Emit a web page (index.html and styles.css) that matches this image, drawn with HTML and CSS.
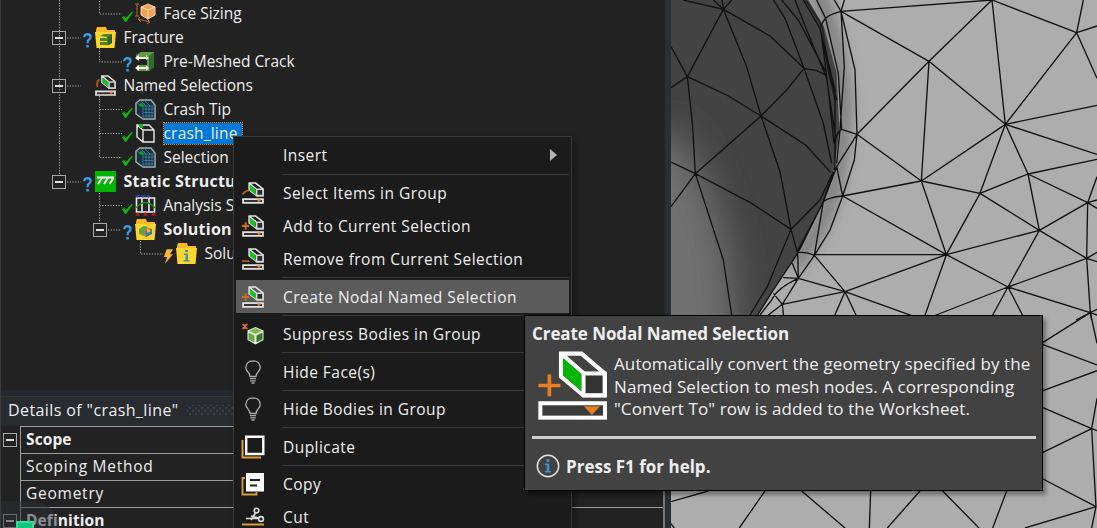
FILE: index.html
```html
<!DOCTYPE html>
<html lang="en">
<head>
<meta charset="utf-8">
<title>Mechanical - Outline</title>
<link rel="stylesheet" href="styles.css">
</head>
<body>
<svg class="defs" width="0" height="0" aria-hidden="true">
  <defs>
    <symbol id="sel" viewBox="50 120 212 212">
      <path d="M122 131H183L252 190V255H189L122 199Z M122 131L189 190" fill="none" stroke="#fff" stroke-width="13"/>
      <path d="M128 145L183 192V244L128 196Z" fill="#00b400"/>
      <rect x="189" y="190" width="63" height="65" fill="#333" stroke="#fff" stroke-width="12"/>
      <rect x="60" y="279" width="193" height="43" fill="#3a3a3a" stroke="#fff" stroke-width="12"/>
      <path d="M190 288H238L214 314Z" fill="#e67e22"/>
    </symbol>
    <symbol id="selsmall" viewBox="0 0 21 21">
      <path d="M6.800 1H13L20 6.500V13H14L6.800 7.500Z M6.800 1L13.500 6.500" fill="none" stroke="#e2e2e2" stroke-width="1.500"/>
      <path d="M7.500 2.500L13 7.500V12.200L7.500 7.800Z" fill="#12c322"/>
      <path d="M14 7H20V13H14Z" fill="#2b2b2b" stroke="#d5d5d5" stroke-width="1.500"/>
      <path d="M1 16.300H20V20H1Z" fill="#3a3232" stroke="#e2e2e2" stroke-width="1.700"/>
      <path d="M14 16.800H18.500L16.200 19.500Z" fill="#e67e22"/>
    </symbol>
    <symbol id="plussmall" viewBox="0 0 21 21"><path d="M0 10.500H7M3.500 7V14" stroke="#d06c1c" stroke-width="1.800"/></symbol>
    <symbol id="minussmall" viewBox="0 0 21 21"><path d="M0 12.500H7" stroke="#a85c1b" stroke-width="1.700"/></symbol>
    <symbol id="arcsmall" viewBox="0 0 21 21"><path d="M.5 12Q2.500 8.500 7 8" fill="none" stroke="#b45f1c" stroke-width="1.700"/></symbol>
    <symbol id="plus" viewBox="50 120 212 212"><path d="M54 226H120M87 193V258" stroke="#e67e22" stroke-width="11"/></symbol>
    <symbol id="check" viewBox="0 0 12 12"><path d="M0 6.800L2 5.200L4 8L11 .5L12 1.400L4.400 12H3.400Z" fill="#0ab60a"/></symbol>
    <symbol id="ask" viewBox="0 0 9 15"><path d="M1.200 4.200Q1.200 1.200 4.400 1.200Q7.600 1.300 7.600 4Q7.500 5.800 5.600 7Q4.500 7.800 4.500 10.200" fill="none" stroke="#37a0ea" stroke-width="2.200"/><path d="M3.300 12H5.800V14.500H3.300Z" fill="#37a0ea"/></symbol>
    <symbol id="bulb" viewBox="0 0 16 24"><path d="M5 16.500Q5 14 2.600 11.500Q.8 9.500 .8 7.600Q1.200 1 8 .9Q14.800 1 15.200 7.600Q15.200 9.500 13.400 11.500Q11 14 11 16.500ZM5 18.700H11M5.200 20.900H10.800M6.500 23H9.500" fill="none" stroke="#aaa" stroke-width="1.300"/></symbol>
    <symbol id="meshbox" viewBox="0 0 21 21"><path d="M1 4L5 1H16L20 6V20H8L1 15Z" fill="#173443" stroke="#aab1b5" stroke-width="1.400"/><path d="M8 7V20M1 4L8 7H20M11 7V20M14 7V20M17 7V20M8 10H20M8 13.500H20M8 17H20M5 1L11 7M9 1L15 7" stroke="#477f9c" stroke-width=".8" fill="none"/><path d="M4 5L7 4L9 6L7 8L4 7Z" fill="#06a50e"/></symbol>
    <symbol id="folder" viewBox="0 0 21 21"><path d="M1 3L2 0H11L12 3H20V7H1Z" fill="#fbb928"/><path d="M0 5H21L19.500 21H1.500Z" fill="#fdd52f"/></symbol>
  </defs>
</svg>
<div class="app">
  <section class="side">
    <div class="tree">
      <svg class="branches" width="220" height="280" viewBox="0 0 220 280"><path d="M59.500 0V176M99.500 1V14H122M67 38H81M99.500 48V62H122M67 86H81M99.500 96V157.500H122M99.500 109.500H122M99.500 133.500H122M67 182H81M99.500 193V223M99.500 205.500H122M108 230H121M140.500 241V254H163"/></svg>
      <div class="row l2"><svg class="st"><use href="#check"/></svg><svg class="ic" viewBox="0 0 21 21"><path d="M13 1L20 4V12L13 16L6 12V4Z" fill="#f6a04d" stroke="#f2d4b4"/><path d="M6 4L13 7L20 4M13 7V16" stroke="#ffe1bd" fill="none"/><path d="M0 1H4M2 1V13M0 13H4M3 16L15 19M5 14L3 16L6 19M12 16L15 19L12 21" stroke="#b56f24" fill="none"/></svg><span>Face Sizing</span></div>
      <div class="row l1"><i class="box"></i><svg class="st"><use href="#ask"/></svg><svg class="ic" viewBox="0 0 21 21"><use href="#folder"/><path d="M5 9L9 7H17V16L14 18H5V15H12V14H5V11H12V10Z" fill="#4e8330"/><path d="M13 10L17 7V16L13 18Z" fill="#2f6324"/></svg><span>Fracture</span></div>
      <div class="row l2"><svg class="st"><use href="#ask"/></svg><svg class="ic" viewBox="0 0 21 21"><path d="M1 4L6 1H19V16L14 20H2V14H12V8H1Z" fill="#659b41"/><path d="M14 5L19 1V16L14 20Z" fill="#2e6e30"/><path d="M0 7L4 4V6H11V4L14 7L11 9V8H4V10ZM0 17L4 14V16H11V14L14 17L11 20V18H4V20Z" fill="#f3f8ef"/></svg><span>Pre-Meshed Crack</span></div>
      <div class="row l1"><i class="box"></i><svg class="st"></svg><svg class="ic" viewBox="0 0 21 21"><use href="#selsmall"/><path d="M4.500 4.500Q1 6 2.500 12" fill="none" stroke="#c8661a" stroke-width="1.500"/></svg><span>Named Selections</span></div>
      <div class="row l2"><svg class="st"><use href="#check"/></svg><svg class="ic"><use href="#meshbox"/></svg><span>Crash Tip</span></div>
      <div class="row l2"><svg class="st"><use href="#check"/></svg><svg class="ic" viewBox="0 0 21 21"><path d="M2 2H14L19 7V19H8L2 14ZM2 2L8 7H19M8 7V19" fill="none" stroke="#e8e8e8" stroke-width="1.400"/><path d="M3 1H8V5H5Z" fill="#12b51a"/></svg><span class="picked">crash_line</span></div>
      <div class="row l2"><svg class="st"><use href="#check"/></svg><svg class="ic"><use href="#meshbox"/></svg><span>Selection</span></div>
      <div class="row l1 b"><i class="box"></i><svg class="st"><use href="#ask"/></svg><svg class="ic" viewBox="0 0 21 21"><path d="M0 0H21V21H0Z" fill="#00b400"/><path d="M2 6.500H19M7 7L3 13M13 7L9 13M18.500 7L14.500 13" stroke="#fff" stroke-width="2"/></svg><span>Static Structural</span></div>
      <div class="row l2"><svg class="st"><use href="#check"/></svg><svg class="ic" viewBox="0 0 21 21"><path d="M1.500 3H19.500V17H1.500ZM7 3V17M14 3V17" fill="none" stroke="#eee" stroke-width="1.600"/><path d="M1 13Q10.500 2 20 13" fill="none" stroke="#0b980f" stroke-width="1.300"/><path d="M0 0H5L2.500 3ZM5.500 0H10.500L8 3ZM11 0H16L13.500 3Z" fill="#2540ce"/><path d="M0 20.500L2.500 17L5 20.500ZM8 20.500L10.500 17L13 20.500ZM16 20.500L18.500 17L21 20.500Z" fill="#d01414"/></svg><span>Analysis Settings</span></div>
      <div class="row l2 b"><i class="box"></i><svg class="st"><use href="#ask"/></svg><svg class="ic" viewBox="0 0 21 21"><use href="#folder"/><path d="M4 10L9 7L17 10V15L11 18L4 15Z" fill="#e9792d"/><path d="M4 10L9 7L13 8L9 12L10 17L4 14Z" fill="#57a947"/><path d="M10 12L17 10V15L11 18Z" fill="#3f79aa"/><path d="M12 9L16 12L12 14Z" fill="#d7c638"/></svg><span>Solution</span></div>
      <div class="row l3"><svg class="st" viewBox="0 0 12 16"><path d="M4 0H11L7.500 5.500H11L2 16L4.500 8.500H1Z" fill="#f9b52c"/></svg><svg class="ic" viewBox="0 0 21 21"><use href="#folder"/><path d="M9 7H12V9H9ZM8 10.500H12V17H13.500V18.500H7.500V17H9.500V12H8Z" fill="#4593a8"/></svg><span>Solution Information</span></div>
    </div>
    <div class="details-head"><span>Details of "crash_line"</span><i class="grip"></i></div>
    <div class="details">
      <div class="gut"><i class="box"></i></div><div class="cell b">Scope</div>
      <div class="gut"></div><div class="cell">Scoping Method</div>
      <div class="gut"></div><div class="cell">Geometry</div>
      <div class="gut"><i class="box"></i></div><div class="cell b">Definition</div>
    </div>
    <div class="haze"></div>
    <div class="badge"></div>
  </section>
  <div class="splitter"></div>
  <svg class="view" width="426" height="528" viewBox="2013 0 1278 1584">
    <defs>
      <filter id="soft" x="-50%" y="-20%" width="200%" height="140%"><feGaussianBlur stdDeviation="20"/></filter>
      <filter id="wide" x="-100%" y="-100%" width="300%" height="300%"><feGaussianBlur stdDeviation="55"/></filter>
      <clipPath id="hole"><path d="M0 0H445L492 80L530 220L538 390L522 510L488 610L413 762L340 870L290 950H0Z"/></clipPath>
    </defs>
    <rect x="2013" width="1278" height="1584" fill="#adadad"/>
    <g transform="translate(1980 0)">
      <path d="M470 -40L525 130L553 300L545 430L525 560L480 680L400 800" fill="none" stroke="#7a7a7a" stroke-width="44" filter="url(#soft)"/>
      <g clip-path="url(#hole)">
        <path d="M0 0H600V960H0Z" fill="#434343"/>
        <path d="M-100 420L60 400L150 560L210 760L230 1100H-100Z" fill="#707070" filter="url(#wide)"/>
      </g>
      <path d="M437 0L487 80L507 220L525 300" fill="none" stroke="#222" stroke-width="5"/>
    </g>
    <g class="mesh">
      <path transform="translate(1980 0)" d="M70 0L190 28M160 0L190 28L186 0M190 28L215 0M190 28L82 230M190 28L260 200L303 348M190 28L330 108L432 205M33 140L82 230L33 263M82 230L98 380L106 521M82 230L200 285L303 348M303 348L380 270L432 205M303 348L106 521M303 348L437 435L512 517M303 348L360 515L393 688M33 486L106 521L33 620M106 521L190 780L215 945M106 521L270 607L393 688M393 688L480 600L520 515M393 688L322 860L270 945M393 688L413 760L415 835M432 205L470 212L497 225M432 205L490 370L515 490M432 205L375 55L340 0M365 0L415 60L460 145L497 215M405 0L440 90L500 235L525 400M430 0L480 85L525 270L525 500M470 0L497 55L535 220L545 390M480 85L510 230L530 300M485 110L505 270L522 430M523 0L543 34L553 0M543 34Q510 42 497 55T480 90M543 34L553 200L540 390L530 490M543 34L585 210L591 403M591 403L545 388Q533 395 527 415L524 510M591 403L530 500L548 588M591 403L583 480L548 588M548 588Q505 592 490 605M548 588L510 690L463 766M490 605L463 766Q440 755 415 758M463 766L415 835M530 500L490 605L413 760L340 870L293 945M520 515L488 610L413 752M415 835L370 833M397 790L415 835M415 835Q350 865 335 900L300 945M415 835L555 875M415 835L367 913L555 875M367 913L340 880M367 913L325 945M367 913L372 960M555 875L518 960M555 875L595 960M463 766L555 875"/>
      <path transform="translate(2580 0)" d="M-57 34L396 0M-57 34L207 184L396 0L650 98L670 0M396 0L436 373L650 98L711 78M650 98L711 235M711 316L436 373L711 463M207 184L436 373L184 543L207 184L-9 403L184 543L-52 588L259 764L184 543L360 580L436 373L504 522L360 580L538 691L504 522L711 478M504 522L683 608L538 691L680 775L683 608M711 530L683 608L711 600M683 608L711 625M360 580L259 764L538 691L444 861L259 764H-137M259 764L-45 875L180 956M259 764L190 960M190 960L444 861L390 960M444 861L495 960M444 861L680 775L691 938L444 861M711 757L680 775L711 785M711 928L691 938L648 960M711 945L691 938L695 960"/>
      <path transform="translate(2340 930)" d="M789 97L931 8L951 100M789 104L951 165M789 242L951 182M789 293L935 356L789 427M951 265L935 356L951 362M935 356L948 590L789 507M948 590L735 654M948 590L935 654M65 543L195 654M272 543L268 654M420 543L322 654M488 543L597 654M680 543L638 654"/>
      <path transform="translate(1710 1440)" d="M302 65L415 33M585 33L508 144M302 130L313 144"/>
    </g>
  </svg>

  <div class="menu">
    <div class="item"><span>Insert</span><i class="sub"></i></div>
    <hr>
    <div class="item"><svg class="mi"><use href="#selsmall"/><use href="#arcsmall"/></svg><span>Select Items in Group</span></div>
    <div class="item"><svg class="mi"><use href="#selsmall"/><use href="#plussmall"/></svg><span>Add to Current Selection</span></div>
    <div class="item"><svg class="mi"><use href="#selsmall"/><use href="#minussmall"/></svg><span>Remove from Current Selection</span></div>
    <hr>
    <div class="item hot"><svg class="mi"><use href="#selsmall"/><use href="#plussmall"/></svg><span>Create Nodal Named Selection</span></div>
    <hr>
    <div class="item"><svg class="mi" viewBox="0 0 22 22"><path d="M.5 1L5.500 6M5.500 1L.5 6M3 1V6" stroke="#d9701c" stroke-width="1.500"/><path d="M13.500 4L21.500 7.500V17L13.500 21.500L5.500 17V7.500Z" fill="#e7f0e0"/><path d="M13.500 5L20 8L13.500 11L7 8Z" fill="#7fb64f"/><path d="M6.500 9.500L12.500 12.500V19.500L6.500 16.500Z" fill="#6ba53f"/><path d="M20.500 9.500L14.500 12.500V19.500L20.500 16.500Z" fill="#38762f"/></svg><span>Suppress Bodies in Group</span></div>
    <hr>
    <div class="item"><svg class="mi bulb"><use href="#bulb"/></svg><span>Hide Face(s)</span></div>
    <hr>
    <div class="item"><svg class="mi bulb"><use href="#bulb"/></svg><span>Hide Bodies in Group</span></div>
    <hr>
    <div class="item"><svg class="mi big" viewBox="0 0 24 24"><path d="M1.500 5V22.500H20" fill="none" stroke="#e09a3c" stroke-width="2"/><path d="M5.200 1.700H22.300V19H5.200Z" fill="none" stroke="#fff" stroke-width="2.400"/></svg><span>Duplicate</span></div>
    <hr>
    <div class="item"><svg class="mi big" viewBox="0 0 24 24"><path d="M4 6H1.500V22.500H15.500V20" fill="none" stroke="#e09a3c" stroke-width="1.800"/><path d="M5 1H23V19.500H5Z" fill="#fff"/><path d="M9 8H19M9 13.500H16" stroke="#222" stroke-width="2"/></svg><span>Copy</span></div>
    <div class="item"><svg class="mi big" viewBox="0 0 24 24"><path d="M1 19.500H23" stroke="#e09a3c" stroke-width="2"/><g fill="none" stroke="#ddd" stroke-width="1.600"><circle cx="15.500" cy="5.500" r="2.300"/><circle cx="20" cy="14" r="2.400"/><path d="M5 13.500H18M14.500 8L10 15M10 11L18 13"/></g></svg><span>Cut</span></div>
  </div>

  <div class="tip">
    <div class="tip-title">Create Nodal Named Selection</div>
    <div class="tip-main">
      <svg class="tip-ic"><use href="#sel"/><use href="#plus"/></svg>
      <p>Automatically convert the geometry specified by the<br>Named Selection to mesh nodes. A corresponding<br>"Convert To" row is added to the Worksheet.</p>
    </div>
    <div class="rule"></div>
    <div class="tip-help"><svg width="24" height="24" viewBox="0 0 24 24"><circle cx="12" cy="12" r="10.700" fill="none" stroke="#e4e4e4" stroke-width="1.500"/><path d="M10.500 5H13.300V7.800H10.500ZM9 9.500H13.300V17H15V18.600H9V17H10.700V11H9Z" fill="#3f92d6"/></svg><span>Press F1 for help.</span></div>
  </div>
</div>
</body>
</html>
```
FILE: styles.css
```css
* { box-sizing: border-box; }
body { margin: 0; overflow: hidden; font-family: "Open Sans", "Noto Sans", sans-serif; color: #efefef; background: #222; }
svg { display: block; flex: none; }
.defs { position: absolute; }
.app { position: relative; display: flex; width: 1097px; height: 528px; overflow: hidden; }
.side { position: relative; width: 665px; height: 528px; overflow: hidden; background: #222; border-left: 1px solid #3c3c3c; display: flex; flex-direction: column; }
.splitter { width: 6px; background: #2b2f35; }
.b { font-weight: 700; }

.tree { position: relative; height: 390px; padding-top: 1px; flex: none; margin-left: -1px; }
.branches { position: absolute; left: 0; top: 0; }
.branches path { fill: none; stroke: #a6a6a6; stroke-width: 1; stroke-dasharray: 1.300 1.400; }
.row { position: relative; display: flex; align-items: center; height: 24px; font-size: 15.500px; letter-spacing: -.02px; white-space: nowrap; }
.row.b { font-size: 16px; letter-spacing: .25px; }
.l1 { padding-left: 52px; }
.l2 { padding-left: 122px; }
.l3 { padding-left: 163px; }
.l2:has(.box) { padding-left: 93px; }
.l2 .box { margin-right: 15px; }
.box { flex: none; width: 14px; height: 14px; margin-top: 1px; margin-right: 16px; border: 1.500px solid #a9a9a9; background: linear-gradient(#ddd, #ddd) center / 8px 2px no-repeat; }
.st { width: 11px; height: 15px; margin-top: 6px; }
.ic { width: 21px; height: 21px; margin: 0 7.500px 0 2px; overflow: visible; }
.picked { background: #0078d7; outline: 1px dotted #e2893a; height: 21px; line-height: 20px; padding-right: 4px; letter-spacing: .2px; }

.details-head { flex: none; height: 36px; padding: 4px 0 0 7px; display: flex; align-items: center; gap: 8px; background: linear-gradient(#25282e 6px, #32363c 6px, #32363c 7px, #282b30 7px); font-size: 16px; letter-spacing: .4px; }
.grip { flex: 1; height: 10px; background: radial-gradient(circle, #3c4045 .8px, transparent 1.200px) 0 0 / 6px 6px, radial-gradient(circle, #3c4045 .8px, transparent 1.200px) 3px 3px / 6px 6px; }
.details { display: grid; grid-template-columns: 19px 1fr; grid-auto-rows: 27px; flex: none; border-right: 2px solid #777; }
.cell { border-top: 1.500px solid #9c9c9c; border-left: 1.500px solid #9c9c9c; padding-left: 5px; line-height: 25px; font-size: 15.500px; letter-spacing: .75px; }
.cell.b { font-size: 15.500px; letter-spacing: .1px; }
.gut { display: flex; align-items: center; padding-left: 2px; }
.haze { position: absolute; left: 0; top: 501px; width: 58px; height: 27px; border-radius: 0 28px 0 0; background: rgba(42, 45, 52, .5); }
.badge { position: absolute; left: 15px; top: 521px; width: 18px; height: 12px; border: 2px solid #2de09a; background: #12c680; }

.view { width: 426px; height: 528px; }
.mesh path { fill: none; stroke: #111; stroke-width: 4; stroke-linejoin: round; }

.menu { position: absolute; left: 233px; top: 136px; width: 339px; height: 400px; padding: 2px; background: #1b1b1b; border: 1px solid #393a3c; box-shadow: 3px 3px 5px rgba(0, 0, 0, .35); }
.item { display: flex; align-items: center; height: 33px; padding-left: 6px; font-size: 15.500px; letter-spacing: .46px; white-space: nowrap; }
.item span { margin-left: 19px; }
.item:first-child { padding-bottom: 1px; }
.item:first-child span { margin-left: 41px; }
.mi { width: 22px; height: 22px; }
.mi.bulb { width: 16px; height: 24px; margin: 0 3px; }
.mi.big { width: 24px; height: 24px; margin: 0 -1px; }
.hot { background: #5b5b5b; }
.sub { margin-left: auto; margin-right: 12px; border: 6px solid transparent; border-left: 7px solid #b5b5b5; border-right: 0; }
.menu hr { height: 1px; margin: 1.750px 0 1.750px 46px; border: 0; background: #36373a; }

.tip { position: absolute; left: 524px; top: 315px; width: 519px; height: 176px; padding: 5px 6px 0 7px; background: #424242; border: 1.500px solid #000; box-shadow: 3px 4px 4px rgba(0, 0, 0, .35); white-space: nowrap; }
.tip-title { height: 26px; line-height: 25px; font-size: 17px; font-weight: 700; letter-spacing: -.08px; }
.tip-main { display: flex; padding: 3px 0 0 5px; }
.tip-ic { width: 71px; height: 71px; }
.tip-main p { margin: 3px 0 0 6px; font-size: 17px; line-height: 22.500px; letter-spacing: .1px; }
.rule { height: 3px; margin-top: 15px; background: #d0cece; }
.tip-help { display: flex; align-items: center; gap: 6px; margin: 15px 0 0 4px; font-size: 17px; font-weight: 700; }
```
